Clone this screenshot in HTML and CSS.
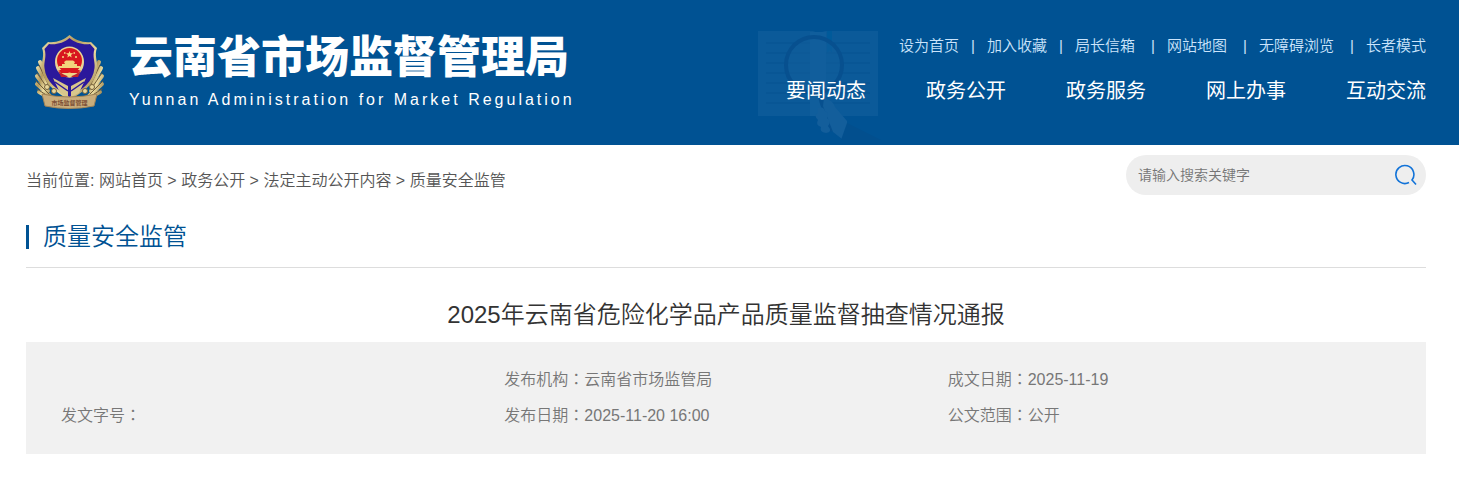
FILE: index.html
```html
<!DOCTYPE html>
<html lang="zh-CN">
<head>
<meta charset="utf-8">
<title>云南省市场监督管理局</title>
<link rel="stylesheet" href="styles.css">
</head>
<body>
<header class="site-header">
  <a class="brand" href="#">
    <svg class="emblem" viewBox="0 0 72 76" aria-hidden="true">
      <defs>
        <linearGradient id="gold" x1="0" y1="0" x2="1" y2="1">
          <stop offset="0" stop-color="#f1e7b4"/>
          <stop offset=".35" stop-color="#b59a5b"/>
          <stop offset=".6" stop-color="#eadb9f"/>
          <stop offset="1" stop-color="#8f7440"/>
        </linearGradient>
      </defs>
      <g fill="none" stroke="url(#gold)" stroke-linecap="round">
        <g stroke-width="4">
          <path d="M6 28L14 46M4 34L14 52M3 42L14 57M3 50L16 62M5 58L18 65"/>
          <path d="M65 28L57 46M67 34L57 52M68 42L57 57M68 50L55 62M66 58L53 65"/>
        </g>
        <g stroke-width="1" stroke="#6f5b38">
          <path d="M5 31L14 50M3 39L14 55M2 47L15 60M3 55L17 64"/>
          <path d="M66 31L57 50M68 39L57 55M69 47L56 60M68 55L54 64"/>
        </g>
      </g>
      <path d="M35.500 1C30 6 22 9 14 8L8 14C11 22 7 27 8 34C9 49 20 57 35.500 66C51 57 62 49 63 34C64 27 60 22 63 14L57 8C49 9 41 6 35.500 1Z" fill="url(#gold)"/>
      <path d="M35.500 4C30 9 22 11 15 10L10.500 15C13 23 9.500 28 10.500 34C12 48 22 55 35.500 63C49 55 59 48 60.500 34C61.500 28 58 23 60.500 15L56 10C49 11 41 9 35.500 4Z" fill="#2b189b"/>
      <path d="M19 44L34 52V63L26 59ZM52 44L37 52V63L45 59Z" fill="#d9c78c"/>
      <path d="M21 48L34 57M50 48L37 57" stroke="#2b189b" stroke-width="1.500"/>
      <ellipse cx="35.500" cy="28" rx="14.500" ry="15.500" fill="#e9d494"/>
      <circle cx="35.500" cy="26.500" r="12.500" fill="#d9161f"/>
      <path d="M35.500 17L36.400 19.300H39L37 21L37.700 23.500L35.500 22L33.300 23.500L34 21L32 19.300H34.600Z" fill="#f7dc82"/>
      <path d="M28 23h2M41 23h2M30 19h1.500M39.500 19h1.500" stroke="#f7dc82" stroke-width="1.500"/>
      <path d="M30 28L32 26.500H39L41 28L40 30H43V32H46V34H25V32H28V30H31Z" fill="#f2d47c"/>
      <path d="M25 36H46L44 39H27Z" fill="#d9161f"/>
      <path d="M24 36Q35.500 48 47 36L44 43H27Z" fill="#c3202a"/>
      <circle cx="35.500" cy="41" r="2.500" fill="#f2d47c"/>
      <g fill="#e8d79b" stroke="#75613a">
        <circle cx="13" cy="53" r="2.500"/><circle cx="20" cy="57" r="2.500"/>
        <circle cx="58" cy="53" r="2.500"/><circle cx="51" cy="57" r="2.500"/>
      </g>
      <path d="M8 60Q35 66 63 60L60 72Q35 77 11 72Z" fill="#c9ad7c" stroke="#a08457"/>
      <text x="35.500" y="71" text-anchor="middle" class="emblem-text">市场监督管理</text>
    </svg>
    <span class="brand-names">
      <span class="brand-zh">云南省市场监督管理局</span>
      <span class="brand-en">Yunnan Administration for Market Regulation</span>
    </span>
  </a>
  <div class="header-menus">
    <svg class="book-art" viewBox="0 0 150 125" aria-hidden="true">
      <path d="M13 11H68Q72 12 73 15Q75 12 80 11H133V96H13Z" fill="#0b5a99"/>
      <path d="M65 12h16V96H65Z" fill="#105e9c"/>
      <path d="M82 11h5V33l-2-3l-3 3Z" fill="#005a9a"/>
      <path d="M21 23H65M21 33H65M21 43H65M21 53H65M21 63H65M21 73H65M21 83H65M81 23H125M81 33H125M81 43H125M81 53H125M81 63H125M81 73H125M81 83H125" stroke="#075291"/>
      <circle cx="69" cy="45" r="28" fill="#115d9b" fill-opacity=".5" stroke="#07508f" stroke-width="4"/>
      <path d="M72 73L75 84L86 112L91 108L80 78L76 72Z" fill="#07508f"/>
      <path d="M79 78Q88 80 90 87L102 101V107L97 119L88 112L78 86Z" fill="#135e9b"/>
      <path d="M73 88Q79 86 80 91Q85 94 82 98Q87 101 83 106Q88 112 81 113Q74 112 76 107Q70 105 73 100Q68 95 73 93Z" fill="#135e9b"/>
      <path d="M102 103L136 120H96Z" fill="#024f8e"/>
    </svg>
    <nav class="quick-links" aria-label="快捷链接">
      <a href="#">设为首页</a><a href="#">加入收藏</a><a href="#">局长信箱</a><a class="wide" href="#">网站地图</a><a class="wide" href="#">无障碍浏览</a><a class="wide" href="#">长者模式</a>
    </nav>
    <nav class="main-nav" aria-label="主导航">
      <a href="#">要闻动态</a><a href="#">政务公开</a><a href="#">政务服务</a><a href="#">网上办事</a><a href="#">互动交流</a>
    </nav>
  </div>
</header>
<main class="page">
  <div class="toolbar">
    <nav class="breadcrumb" aria-label="当前位置">当前位置: <a href="#">网站首页</a> &gt; <a href="#">政务公开</a> &gt; <a href="#">法定主动公开内容</a> &gt; <a href="#">质量安全监管</a></nav>
    <form class="search">
      <input type="text" aria-label="搜索关键字" placeholder="请输入搜索关键字">
      <button type="button" aria-label="搜索">
        <svg viewBox="0 0 22 22" aria-hidden="true"><path d="M14 18.500A9 9 0 1 1 17 16L21 20.500" fill="none" stroke="#1273d8" stroke-width="1.600"/></svg>
      </button>
    </form>
  </div>
  <h2 class="section-title"><span>质量安全监管</span></h2>
  <article>
    <h1 class="article-title">2025年云南省危险化学品产品质量监督抽查情况通报</h1>
    <div class="meta">
      <div></div>
      <div>发布机构<span lang="zh-TW">：</span>云南省市场监管局</div>
      <div>成文日期<span lang="zh-TW">：</span>2025-11-19</div>
      <div>发文字号<span lang="zh-TW">：</span></div>
      <div>发布日期<span lang="zh-TW">：</span>2025-11-20 16:00</div>
      <div>公文范围<span lang="zh-TW">：</span>公开</div>
    </div>
  </article>
</main>
</body>
</html>
```
FILE: styles.css
```css
*, ::before { box-sizing: border-box; }
body {
  margin: 0;
  background: #fff;
  color: #555;
  font: 350 16px/24px "Liberation Sans", "Noto Sans CJK SC", sans-serif;
}
a { color: inherit; text-decoration: none; }

.site-header {
  display: flex;
  justify-content: space-between;
  align-items: flex-start;
  min-height: 145px;
  padding: 32px 33px 0 34px;
  background: #005293;
  color: #fff;
}
.brand { display: flex; gap: 23px; }
.emblem { width: 72px; height: 76px; margin-top: 2px; }
.emblem-text { font: 700 6px "Noto Sans CJK SC", sans-serif; fill: #7d4f35; }
.brand-names { display: flex; flex-direction: column; white-space: nowrap; }
.brand-zh { font-size: 44px; font-weight: 900; line-height: 52px; }
.brand-en { font-size: 16px; font-weight: 400; line-height: 32px; letter-spacing: 3px; }

.header-menus { position: relative; }
.book-art {
  position: absolute;
  top: -12px;
  left: -41px;
  width: 150px;
  height: 125px;
}
.quick-links, .main-nav {
  position: relative;
  display: flex;
  justify-content: flex-end;
  white-space: nowrap;
}
.quick-links { font-size: 15px; line-height: 28px; color: #cbe4fb; }
.quick-links a + a::before {
  content: "|";
  display: inline-block;
  width: 28px;
  text-align: center;
}
.quick-links a.wide::before { padding-left: 4px; width: 32px; }
.main-nav { gap: 60px; margin-top: 14px; font-size: 20px; line-height: 34px; font-weight: 400; }

.page { padding: 10px 33px 24px 26px; }
.toolbar { display: flex; justify-content: space-between; align-items: flex-start; }
.breadcrumb { padding-top: 14px; }
.search {
  display: flex;
  align-items: center;
  width: 300px;
  height: 40px;
  padding: 0 9px 0 12px;
  border-radius: 20px;
  background: #eee;
}
.search input {
  flex: 1;
  min-width: 0;
  padding: 0;
  border: 0;
  outline: 0;
  background: none;
  font: inherit;
  font-size: 14px;
}
.search input::placeholder { color: #757575; opacity: 1; }
.search button { padding: 0; border: 0; background: none; cursor: pointer; }
.search svg { display: block; width: 22px; height: 22px; }

.section-title {
  display: flex;
  align-items: center;
  margin: 12px 0 0;
  height: 61px;
  border-bottom: 1px solid #ddd;
  color: #005293;
  font-size: 24px;
  font-weight: 350;
}
.section-title span { padding-left: 14px; border-left: 3px solid #005293; }
.article-title {
  margin: 28px 0 8px;
  color: #333;
  font-size: 24px;
  font-weight: 350;
  line-height: 38px;
  text-align: center;
}
.meta {
  display: grid;
  grid-template-columns: repeat(3, 1fr);
  padding: 20px 35px;
  background: #f1f1f1;
  color: #777;
  line-height: 36px;
}
.meta > div { min-height: 36px; }
```
